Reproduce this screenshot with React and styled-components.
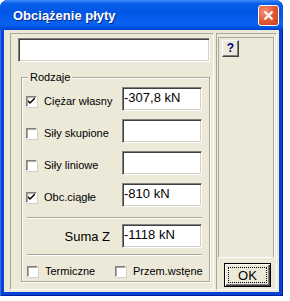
import styled, { createGlobalStyle } from "styled-components";

const GlobalStyle = createGlobalStyle`
  html, body {
    margin: 0;
    padding: 0;
    background: #fff;
  }
  body {
    font-family: "Liberation Sans", Arial, sans-serif;
  }
`;

const Window = styled.div`
  width: 283px;
  height: 296px;
  display: flex;
  flex-direction: column;
  background: #0842d6;
  border-radius: 8px 8px 0 0;
  box-shadow: inset 1px 0 0 #3a6ee8, inset -1px 0 0 #001ea0, inset 0 -1px 0 #001ea0;
  overflow: hidden;
`;

const TitleBar = styled.div`
  height: 30px;
  flex: none;
  display: flex;
  align-items: center;
  justify-content: space-between;
  padding: 0 4px 0 13px;
  box-sizing: border-box;
  background: linear-gradient(
    to bottom,
    #3c8cf7 0%,
    #0a5fe8 12%,
    #0055e5 40%,
    #0a62f0 80%,
    #0053e0 92%,
    #003ed0 100%
  );
`;

const Title = styled.span`
  color: #fff;
  font-size: 13px;
  font-weight: bold;
  text-shadow: 1px 1px 0 #0a2a8a;
  margin-top: 1px;
`;

const CloseButton = styled.div`
  width: 21px;
  height: 21px;
  box-sizing: border-box;
  border: 1px solid #fff;
  border-radius: 3px;
  background: radial-gradient(circle at 30% 30%, #f29276 0%, #e0552f 55%, #c3401c 100%);
  display: flex;
  align-items: center;
  justify-content: center;
`;

const Client = styled.div`
  flex: 1;
  margin: 0 4px 4px 4px;
  background: #ece9d8;
  display: flex;
  gap: 2px;
  padding: 3px 2px 2px 6px;
`;

const Panel = styled.div`
  box-sizing: border-box;
  border: 1px solid;
  border-color: #aca899 #fff #fff #aca899;
  display: flex;
  flex-direction: column;
`;

const LeftPanel = styled(Panel)`
  width: 204px;
  padding: 4px 3px 7px 7px;
`;

const RightPanel = styled(Panel)`
  width: 61px;
  padding: 3px 2px 2px 1px;
  gap: 5px;
`;

const HelpArea = styled.div`
  flex: 1;
  box-sizing: border-box;
  border: 1px solid;
  border-color: #aca899 #aca899 #fff #aca899;
  box-shadow: 1px 0 0 #fff;
  padding: 2px 3px;
`;

const Field = styled.div`
  box-sizing: border-box;
  width: ${({ $w }) => $w || 80}px;
  height: 24px;
  background: #fff;
  border: 1px solid;
  border-color: #808080 #fff #fff #808080;
  box-shadow: inset 1px 1px 0 #404040, inset -1px -1px 0 #d4d0c8;
  font-size: 13px;
  line-height: 20px;
  padding-left: 1px;
  color: #000;
  white-space: nowrap;
`;

const GroupBox = styled.div`
  position: relative;
  flex: 1;
  margin: 15px 0 0 3px;
  border: 1px solid #aca899;
  box-shadow: inset 1px 1px 0 #fff, 1px 1px 0 #fff;
  padding: 9px 7px 0 4px;
  display: flex;
  flex-direction: column;
`;

const Legend = styled.span`
  position: absolute;
  top: -7px;
  left: 6px;
  padding: 0 2px;
  background: #ece9d8;
  font-size: 11px;
  line-height: 13px;
  color: #000;
`;

const Rows = styled.div`
  display: flex;
  flex-direction: column;
  gap: 8px;
`;

const Row = styled.div`
  display: flex;
  align-items: center;
  margin-top: ${({ $mt }) => $mt || 0}px;
`;

const CheckLabel = styled.label`
  width: ${({ $w }) => $w || 96}px;
  display: flex;
  align-items: center;
  gap: 7px;
  font-size: 11px;
  color: #000;
  padding-top: ${({ $shift }) => $shift ?? 4}px;
  white-space: nowrap;
`;

const Box = styled.span`
  width: 11px;
  height: 11px;
  flex: none;
  box-sizing: border-box;
  background: #fff;
  border: 1px solid;
  border-color: #808080 #fff #fff #808080;
  box-shadow: inset 1px 1px 0 #aca899, 1px 1px 0 #d4d0c8;
  display: flex;
  align-items: center;
  justify-content: center;
`;

const Separator = styled.div`
  height: 1px;
  margin: ${({ $m }) => $m};
  background: #aca899;
  box-shadow: 0 1px 0 #fff;
`;

const SumLabel = styled.span`
  width: 84px;
  margin-right: 12px;
  text-align: right;
  font-size: 13px;
  color: #000;
`;

const BottomRow = styled.div`
  display: flex;
  gap: 22px;
  padding-left: 1px;
`;

const HelpButton = styled.div`
  width: 17px;
  height: 17px;
  box-sizing: border-box;
  background: #ece9d8;
  border: 1px solid;
  border-color: #fff #404040 #404040 #fff;
  box-shadow: inset -1px -1px 0 #808080;
  color: #000080;
  font-weight: bold;
  font-size: 12px;
  line-height: 14px;
  text-align: center;
`;

const OkButton = styled.div`
  width: 47px;
  height: 24px;
  margin-left: 6px;
  flex: none;
  box-sizing: border-box;
  border: 1px solid #000;
  background: #ece9d8;
  box-shadow: inset 1px 1px 0 #fff, inset -1px -1px 0 #404040, inset -2px -2px 0 #808080;
  padding: 3px;
  display: flex;
`;

const Focus = styled.span`
  flex: 1;
  border: 1px dotted #000;
  display: flex;
  align-items: center;
  justify-content: center;
  font-size: 13px;
  color: #000;
`;

const Check = () => (
  <svg width="7" height="7" viewBox="0 0 7 7">
    <path d="M0 2 L0 4 L2 6 L7 1 L7 -1 L2 4 Z" fill="#000" />
  </svg>
);

const CheckBox = ({ checked, label, width, shift }) => (
  <CheckLabel $w={width} $shift={shift}>
    <Box>{checked && <Check />}</Box>
    {label}
  </CheckLabel>
);

const rows = [
  { label: "Ciężar własny", checked: true, value: "-307,8 kN" },
  { label: "Siły skupione", checked: false, value: "" },
  { label: "Siły liniowe", checked: false, value: "" },
  { label: "Obc.ciągłe", checked: true, value: "-810 kN" }
];

export default function App() {
  return (
    <>
      <GlobalStyle />
      <Window>
        <TitleBar>
          <Title>Obciążenie płyty</Title>
          <CloseButton>
            <svg width="11" height="11" viewBox="0 0 11 11">
              <path d="M1.5 1.5 L9.5 9.5 M9.5 1.5 L1.5 9.5" stroke="#fff" strokeWidth="2.2" />
            </svg>
          </CloseButton>
        </TitleBar>
        <Client>
          <LeftPanel>
            <Field $w={192} />
            <GroupBox>
              <Legend>Rodzaje</Legend>
              <Rows>
                {rows.map((r) => (
                  <Row key={r.label}>
                    <CheckBox checked={r.checked} label={r.label} />
                    <Field>{r.value}</Field>
                  </Row>
                ))}
              </Rows>
              <Separator $m="10px 0 0 1px" />
              <Row $mt={6}>
                <SumLabel>Suma Z</SumLabel>
                <Field>-1118 kN</Field>
              </Row>
              <Separator $m="6px 0 0 1px" />
              <BottomRow>
                <CheckBox label="Termiczne" width={66} shift={10} />
                <CheckBox label="Przem.wstęne" width={84} shift={10} />
              </BottomRow>
            </GroupBox>
          </LeftPanel>
          <RightPanel>
            <HelpArea>
              <HelpButton>?</HelpButton>
            </HelpArea>
            <OkButton>
              <Focus>OK</Focus>
            </OkButton>
          </RightPanel>
        </Client>
      </Window>
    </>
  );
}
